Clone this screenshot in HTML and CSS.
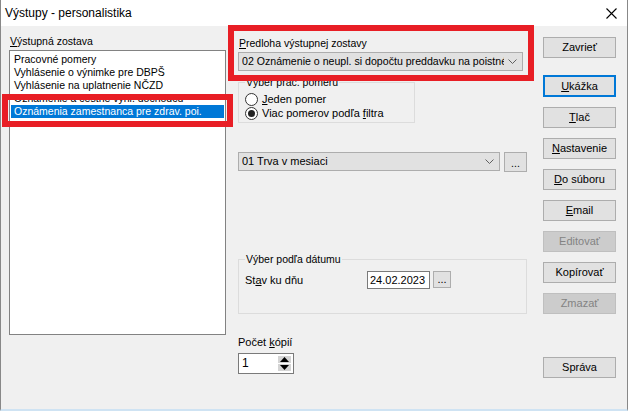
FILE: index.html
```html
<!DOCTYPE html>
<html lang="sk">
<head>
<meta charset="utf-8">
<title>Výstupy - personalistika</title>
<link rel="stylesheet" href="styles.css">
</head>
<body>
<div class="window">
  <div class="titlebar">
    <span class="title">Výstupy - personalistika</span>
    <svg class="close" width="11" height="11" viewBox="0 0 11 11"><path d="M0.5 0.5 L10.5 10.5 M10.5 0.5 L0.5 10.5" stroke="#000" stroke-width="1.1" fill="none"/></svg>
  </div>
  <div class="body">
    <div class="col-left">
      <div class="label"><u>V</u>ýstupná zostava</div>
      <div class="listbox">
        <div class="item">Pracovné pomery</div>
        <div class="item">Vyhlásenie o výnimke pre DBPŠ</div>
        <div class="item">Vyhlásenie na uplatnenie NČZD</div>
        <div class="item">Oznámenie a čestné vyhl. dôchodcu</div>
        <div class="item selected">Oznámenia zamestnanca pre zdrav. poi.</div>
      </div>
    </div>
    <div class="col-mid">
      <div class="label"><u>P</u>redloha výstupnej zostavy</div>
      <div class="combo combo-main">
        <span class="combo-text main-text">02 Oznámenie o neupl. si dopočtu preddavku na poistné</span>
        <svg class="chev" width="9" height="5" viewBox="0 0 9 5"><path d="M0.5 0.5 L4.5 4.5 L8.5 0.5" stroke="#606060" fill="none"/></svg>
      </div>
      <fieldset class="group group-radio">
        <legend>Výber prac. pomeru</legend>
        <div class="radio-row"><span class="radio"></span><span><u>J</u>eden pomer</span></div>
        <div class="radio-row"><span class="radio checked"></span><span>Viac pomerov podľa <u>f</u>iltra</span></div>
      </fieldset>
      <div class="combo-row">
        <div class="combo combo-filter">
          <span class="combo-text">01 Trva v mesiaci</span>
          <svg class="chev" width="9" height="5" viewBox="0 0 9 5"><path d="M0.5 0.5 L4.5 4.5 L8.5 0.5" stroke="#606060" fill="none"/></svg>
        </div>
        <div class="dots dots-combo">...</div>
      </div>
      <fieldset class="group group-date">
        <legend>Výber podľa dátumu</legend>
        <div class="date-row">
          <span class="date-label">St<u>a</u>v ku dňu</span>
          <div class="date-input">24.02.2023</div>
          <div class="dots dots-date">...</div>
        </div>
      </fieldset>
      <div class="label copies-label">Počet <u>k</u>ópií</div>
      <div class="spin">
        <span class="spin-text">1</span>
        <div class="spin-btns">
          <span class="spin-btn"><svg width="9" height="5" viewBox="0 0 9 5"><path d="M4.5 0 L9 5 L0 5 Z" fill="#000"/></svg></span>
          <span class="spin-btn"><svg width="9" height="5" viewBox="0 0 9 5"><path d="M0 0 L9 0 L4.5 5 Z" fill="#000"/></svg></span>
        </div>
      </div>
    </div>
    <div class="col-right">
      <div class="btn">Zavrieť</div>
      <div class="btn-stack">
        <div class="btn default"><u>U</u>kážka</div>
        <div class="btn"><u>T</u>lač</div>
        <div class="btn"><u>N</u>astavenie</div>
        <div class="btn"><u>D</u>o súboru</div>
        <div class="btn"><u>E</u>mail</div>
        <div class="btn disabled">Editovať</div>
        <div class="btn">Kopírovať</div>
        <div class="btn disabled">Zmazať</div>
      </div>
      <div class="btn btn-sprava">Správa</div>
    </div>
  </div>
  <div class="mark mark-list"></div>
  <div class="mark mark-template"></div>
</div>
</body>
</html>
```
FILE: styles.css
```css
* { box-sizing: border-box; }
html, body { margin: 0; padding: 0; }
body {
  width: 628px;
  height: 411px;
  overflow: hidden;
  background: #ffffff;
  font-family: "Liberation Sans", Arial, sans-serif;
  font-size: 10.5px;
  line-height: 13px;
  color: #000;
}
u { text-decoration: underline; text-underline-offset: 1px; }

.window {
  position: relative;
  width: 628px;
  height: 411px;
  border-left: 1px solid #888888;
  border-right: 1px solid #888888;
  border-bottom: 2px solid #cfe3f3;
  background: #f0f0f0;
  display: flex;
  flex-direction: column;
}

.titlebar {
  height: 26px;
  flex: none;
  background: #ffffff;
  display: flex;
  align-items: center;
  justify-content: space-between;
  padding: 0 10px 0 4px;
}
.title { font-size: 12px; line-height: 14px; color: #000; }
.close { display: block; margin-top: 1px; }

.body {
  flex: 1;
  display: flex;
  padding-left: 8px;
}

/* left column */
.col-left {
  width: 217px;
  padding-top: 9px;
  display: flex;
  flex-direction: column;
}
.label { height: 13px; padding-left: 1px; white-space: nowrap; }
.listbox {
  margin-top: 2px;
  height: 285px;
  background: #ffffff;
  border: 1px solid #828282;
  padding: 2px 1px;
}
.item {
  height: 13px;
  padding-left: 3px;
  white-space: nowrap;
  overflow: hidden;
}
.item.selected { background: #0078d7; color: #ffffff; }

/* middle column */
.col-mid {
  width: 289px;
  margin-left: 12px;
  padding-top: 11px;
  display: flex;
  flex-direction: column;
}
.combo {
  height: 19px;
  background: #e1e1e1;
  border: 1px solid #adadad;
  display: flex;
  align-items: center;
  padding: 0 5px 0 3px;
  overflow: hidden;
}
.combo-main { margin-top: 2px; width: 285px; }
.combo-text { flex: 1; white-space: nowrap; overflow: hidden; font-size: 11px; }
.combo-text.main-text { font-size: 10.6px; }
.chev { flex: none; margin-left: 4px; }

.group {
  margin: 0;
  min-width: 0;
  border: 1px solid #dcdcdc;
}
.group legend { padding: 0 1px; height: 13px; line-height: 13px; }
.group-radio {
  margin-top: 5px;
  width: 177px;
  padding: 3px 6px 2px 6px;
}
.radio-row {
  height: 14px;
  display: flex;
  align-items: center;
  gap: 4px;
  font-size: 11px;
}
.radio {
  width: 13px;
  height: 13px;
  border-radius: 50%;
  border: 1px solid #333333;
  background: #ffffff;
  display: flex;
  align-items: center;
  justify-content: center;
  flex: none;
}
.radio.checked::after {
  content: "";
  width: 7px;
  height: 7px;
  border-radius: 50%;
  background: #222222;
}

.combo-row {
  margin-top: 29px;
  display: flex;
  gap: 4px;
}
.combo-filter { width: 262px; }
.dots {
  background: #e1e1e1;
  border: 1px solid #adadad;
  display: flex;
  align-items: flex-end;
  justify-content: center;
  line-height: 11px;
  padding-bottom: 2px;
}
.dots-combo { width: 23px; height: 20px; }

.group-date {
  margin-top: 81px;
  width: 289px;
  padding: 5px 6px 24px 6px;
}
.date-row { display: flex; align-items: center; height: 18px; font-size: 11px; }
.date-label { width: 122px; }
.date-input {
  width: 63px;
  height: 18px;
  background: #ffffff;
  border: 1px solid #7a7a7a;
  padding: 1px 2px;
  line-height: 14px;
  font-size: 11px;
  white-space: nowrap;
  overflow: hidden;
}
.dots-date { width: 18px; height: 17px; margin-left: 3px; margin-top: -1px; }

.copies-label { margin-top: 22px; padding-left: 0; font-size: 11px; }
.spin {
  margin-top: 4px;
  width: 56px;
  height: 21px;
  background: #ffffff;
  border: 1px solid #7a7a7a;
  display: flex;
  align-items: center;
  padding: 0 2px 0 3px;
}
.spin-text { flex: 1; font-size: 12px; }
.spin-btns { display: flex; flex-direction: column; gap: 1px; }
.spin-btn {
  width: 13px;
  height: 7px;
  background: #d4d4d4;
  display: flex;
  align-items: center;
  justify-content: center;
}
.spin-btn svg { display: block; }

/* right column */
.col-right {
  width: 73px;
  margin-left: 16px;
  padding-top: 11px;
  display: flex;
  flex-direction: column;
  font-size: 11px;
}
.btn {
  height: 21px;
  background: #e1e1e1;
  border: 1px solid #adadad;
  display: flex;
  align-items: center;
  justify-content: center;
  white-space: nowrap;
}
.btn-stack {
  margin-top: 17px;
  display: flex;
  flex-direction: column;
  gap: 10px;
}
.btn-stack .btn { height: 21px; }
.btn.default { border: 2px solid #0078d7; height: 22px; }
.btn.disabled { background: #cccccc; border-color: #bfbfbf; color: #838383; }
.btn-sprava { margin-top: 43px; }

/* red annotation frames drawn over the dialog */
.mark {
  position: absolute;
  border: 6px solid #e81e25;
  pointer-events: none;
}
.mark-list { left: 1px; top: 94px; width: 231px; height: 33px; }
.mark-template { left: 227px; top: 25px; width: 306px; height: 56px; }
```
